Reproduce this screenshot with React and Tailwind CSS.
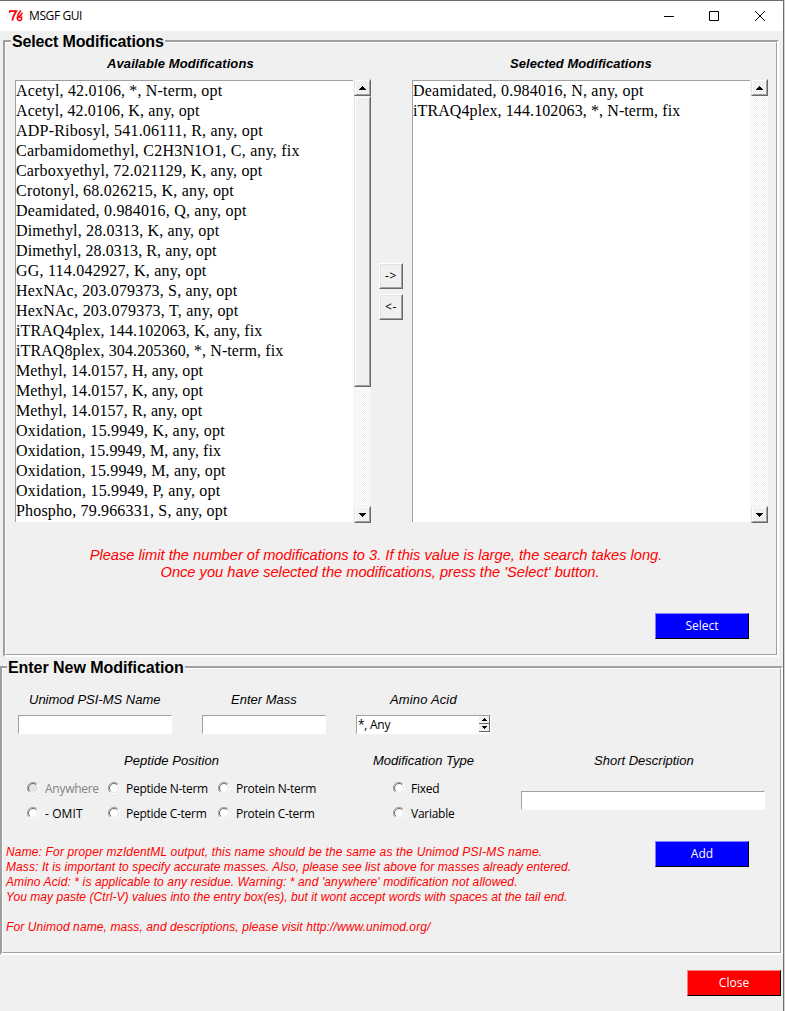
import React from "react";

const TIGHT = "tracking-[0.1px]";
const MEDIUM = "tracking-[0.16px]";
const WIDE = "tracking-[0.22px]";

const available = [
  ["Acetyl, 42.0106, *, N-term, opt", MEDIUM],
  ["Acetyl, 42.0106, K, any, opt", TIGHT],
  ["ADP-Ribosyl, 541.06111, R, any, opt", WIDE],
  ["Carbamidomethyl, C2H3N1O1, C, any, fix", WIDE],
  ["Carboxyethyl, 72.021129, K, any, opt", MEDIUM],
  ["Crotonyl, 68.026215, K, any, opt", WIDE],
  ["Deamidated, 0.984016, Q, any, opt", WIDE],
  ["Dimethyl, 28.0313, K, any, opt", MEDIUM],
  ["Dimethyl, 28.0313, R, any, opt", TIGHT],
  ["GG, 114.042927, K, any, opt", WIDE],
  ["HexNAc, 203.079373, S, any, opt", MEDIUM],
  ["HexNAc, 203.079373, T, any, opt", WIDE],
  ["iTRAQ4plex, 144.102063, K, any, fix", TIGHT],
  ["iTRAQ8plex, 304.205360, *, N-term, fix", TIGHT],
  ["Methyl, 14.0157, H, any, opt", TIGHT],
  ["Methyl, 14.0157, K, any, opt", TIGHT],
  ["Methyl, 14.0157, R, any, opt", TIGHT],
  ["Oxidation, 15.9949, K, any, opt", WIDE],
  ["Oxidation, 15.9949, M, any, fix", TIGHT],
  ["Oxidation, 15.9949, M, any, opt", MEDIUM],
  ["Oxidation, 15.9949, P, any, opt", WIDE],
  ["Phospho, 79.966331, S, any, opt", MEDIUM],
];

const selected = [
  ["Deamidated, 0.984016, N, any, opt", WIDE],
  ["iTRAQ4plex, 144.102063, *, N-term, fix", TIGHT],
];

/* Two-tone etched frame with its caption over the top edge */
function GroupFrame({ className, caption, captionClass, children }) {
  return (
    <section
      className={`relative border-t-2 border-l-2 border-r-2 border-b-2 border-t-[#a0a0a0] border-l-[#a0a0a0] border-r-white border-b-white ${className}`}
    >
      <div className="h-full border border-t-white border-l-white border-r-[#a0a0a0] border-b-[#a0a0a0]">
        {children}
      </div>
      <h2
        className={`absolute -top-[10px] h-[20px] bg-[#f0f0f0] px-px text-[16px] leading-[20px] font-bold whitespace-nowrap ${captionClass}`}
      >
        {caption}
      </h2>
    </section>
  );
}

function Raised({ className, children }) {
  return (
    <div
      className={`shrink-0 border border-t-[#f0f0f0] border-l-[#e3e3e3] border-r-[#696969] border-b-[#696969] bg-[#f0f0f0] ${className}`}
    >
      <div className="flex h-full items-center justify-center border border-t-white border-l-white border-r-[#a0a0a0] border-b-[#a0a0a0]">
        {children}
      </div>
    </div>
  );
}

function Arrow({ down }) {
  return (
    <svg width="7" height="4" viewBox="0 0 7 4" shapeRendering="crispEdges">
      <path
        d={
          down
            ? "M0 0h7v1H0zM1 1h5v1H1zM2 2h3v1H2zM3 3h1v1H3z"
            : "M3 0h1v1H3zM2 1h3v1H2zM1 2h5v1H1zM0 3h7v1H0z"
        }
        fill="#000"
      />
    </svg>
  );
}

function ScrollList({ items, thumb }) {
  return (
    <div className="flex h-[444px]">
      <ul className="mt-px h-[442px] w-[338px] overflow-hidden border-t border-l border-[#a0a0a0] bg-white font-['Liberation_Serif',serif] text-[16px] leading-[20px] whitespace-nowrap">
        {items.map(([text, tracking]) => (
          <li key={text} className={`h-[20px] ${tracking}`}>
            {text}
          </li>
        ))}
      </ul>
      <div className="flex w-[18px] flex-col bg-[repeating-conic-gradient(#ffffff_0_25%,#f0f0f0_0_50%)] bg-[length:2px_2px] pl-px">
        <Raised className="h-[17px] w-[17px]">
          <Arrow />
        </Raised>
        {thumb && <Raised className="h-[291px] w-[17px]" />}
        <div className="grow" />
        <Raised className="h-[17px] w-[17px]">
          <Arrow down />
        </Raised>
      </div>
    </div>
  );
}

function MoveButton({ children }) {
  return (
    <button className="h-[26px] w-[24px] border border-t-white border-l-white border-r-[#696969] border-b-[#696969]">
      <span className="flex h-full items-center justify-center border border-t-[#e3e3e3] border-l-[#e3e3e3] border-r-[#a0a0a0] border-b-[#a0a0a0] font-['Open_Sans',sans-serif] text-[12px] leading-none tracking-[0.6px]">
        {children}
      </span>
    </button>
  );
}

function ActionButton({ className, children }) {
  return (
    <button
      className={`flex h-[26px] w-[94px] items-center justify-center border border-r-black border-b-black font-['Open_Sans',sans-serif] text-[12px] leading-[16px] text-white ${className}`}
    >
      {children}
    </button>
  );
}

function Entry({ className, children }) {
  return (
    <div
      className={`flex h-[19px] border border-t-[#a0a0a0] border-l-[#a0a0a0] border-r-white border-b-white bg-white ${className}`}
    >
      {children}
    </div>
  );
}

function Radio({ disabled, wide, children }) {
  return (
    <label
      className={`flex h-[25px] items-center font-['Open_Sans',sans-serif] text-[12px] whitespace-nowrap ${
        disabled ? "text-[#838383]" : "text-black"
      } ${wide ? "tracking-[0.1px]" : "tracking-[-0.27px]"}`}
    >
      <svg width="12" height="12" viewBox="0 0 12 12" className="mr-[6px] -mt-[2px] shrink-0">
        <circle cx="6" cy="6" r="5" fill={disabled ? "#e6e6e6" : "#fff"} />
        <path d="M2 10A5.5 5.5 0 0 1 10 2" fill="none" stroke="#a0a0a0" />
        <path d="M2.8 9.2A4.5 4.5 0 0 1 9.2 2.8" fill="none" stroke="#696969" />
        <path d="M2 10A5.6 5.6 0 0 0 10 2" fill="none" stroke="#fff" />
        <path d="M2.8 9.2A4.5 4.5 0 0 0 9.2 2.8" fill="none" stroke="#e3e3e3" />
      </svg>
      {children}
    </label>
  );
}

function FieldLabel({ className, children }) {
  return (
    <div className={`h-[18px] text-[13px] leading-[18px] whitespace-nowrap italic ${className}`}>
      {children}
    </div>
  );
}

export default function App() {
  return (
    <div className="flex h-[1011px] w-[785px] overflow-hidden bg-[#d4d4d4] font-['Liberation_Sans',sans-serif] text-black">
      <div className="flex w-[784px] flex-col border-t border-r border-[#6e6e6e] bg-[#f0f0f0]">
        <header className="flex h-[30px] shrink-0 items-center bg-white pl-[9px]">
          <svg width="15" height="12" viewBox="0 0 15 12" fill="none" stroke="#ff0000">
            <path d="M.3 3V1.200H7.200L5.500 4.200L4 7.500L3.300 10.600" strokeWidth="1.8" />
            <path d="M11.800 .3L9.300 4.300L8.200 8.200L9 10.300" strokeWidth="1.5" />
            <path d="M13.600 2.800L10.800 6L9.400 7.400H12.600V9.300L11.500 10.500L9 10.300" strokeWidth="1.4" />
            <path d="M11.200 5.300L13.300 6.300" />
          </svg>
          <h1 className="ml-[5px] font-['Open_Sans',sans-serif] text-[12px] leading-[16px] tracking-[-0.4px]">
            MSGF GUI
          </h1>
          <svg
            width="102"
            height="12"
            viewBox="0 0 102 12"
            className="mr-[17px] ml-auto"
            fill="none"
            stroke="#000"
          >
            <path d="M0 6.500h10" />
            <path d="M45.500 1.500h9v9h-9z" />
            <path d="M91 1l10 10M101 1L91 11" />
          </svg>
        </header>

        <GroupFrame
          className="mt-[9px] ml-[3px] h-[617px] w-[776px] shrink-0"
          caption="Select Modifications"
          captionClass="left-[6px] tracking-[-0.15px]"
        >
          <div className="flex h-full flex-col pt-[12px]">
            <div className="flex pl-[9px]">
              <div className="w-[356px]">
                <h3 className="mb-[6px] h-[18px] pl-[92px] text-[13px] leading-[18px] font-bold tracking-[0.1px] italic">
                  Available Modifications
                </h3>
                <ScrollList items={available} thumb />
              </div>
              <div className="flex w-[41px] flex-col gap-[5px] pt-[208px] pl-[8px]">
                <MoveButton>-&gt;</MoveButton>
                <MoveButton>&lt;-</MoveButton>
              </div>
              <div className="w-[356px]">
                <h3 className="mb-[6px] h-[18px] pl-[98px] text-[13px] leading-[18px] font-bold tracking-[0.04px] italic">
                  Selected Modifications
                </h3>
                <ScrollList items={selected} />
              </div>
            </div>
            <p className="mt-[24px] h-[34px] pr-[30px] text-center text-[14.67px] leading-[17px] whitespace-nowrap text-[#ff0000] italic">
              Please limit the number of modifications to 3. If this value is large, the search takes long.
              <br />
              <span className="pl-[8px]">
                Once you have selected the modifications, press the 'Select' button.
              </span>
            </p>
            <ActionButton className="mt-[32px] ml-[649px] border-t-[#7f7fff] border-l-[#7f7fff] bg-[#0000ff]">
              Select
            </ActionButton>
          </div>
        </GroupFrame>

        <GroupFrame
          className="mt-[9px] h-[289px] w-[783px] shrink-0"
          caption="Enter New Modification"
          captionClass="left-[5px] tracking-[-0.05px]"
        >
          <div className="flex h-full flex-col pt-[22px]">
            <div className="flex">
              <div className="w-[184px] pl-[15px]">
                <FieldLabel className="mb-[6px] pl-[11px]">Unimod PSI-MS Name</FieldLabel>
                <Entry className="w-[154px]" />
              </div>
              <div className="w-[154px] pl-[15px]">
                <FieldLabel className="mb-[6px] pl-[29px]">Enter Mass</FieldLabel>
                <Entry className="w-[124px]" />
              </div>
              <div className="w-[150px] pl-[15px]">
                <FieldLabel className="mb-[6px] pl-[34px] tracking-[0.15px]">Amino Acid</FieldLabel>
                <Entry className="w-[135px]">
                  <span className="grow pl-px font-['Open_Sans',sans-serif] text-[12px] leading-[18px] tracking-[-0.27px]">
                    *, Any
                  </span>
                  <span className="flex w-[11px] flex-col">
                    <span className="flex h-[8px] items-center justify-center border-r border-b border-[#696969] bg-[#f0f0f0]">
                      <svg width="5" height="3" viewBox="0 0 5 3" shapeRendering="crispEdges">
                        <path d="M2 0h1v1H2zM1 1h3v1H1zM0 2h5v1H0z" />
                      </svg>
                    </span>
                    <span className="flex h-[8px] items-center justify-center border-r border-b border-[#696969] bg-[#f0f0f0]">
                      <svg width="5" height="3" viewBox="0 0 5 3" shapeRendering="crispEdges">
                        <path d="M0 0h5v1H0zM1 1h3v1H1zM2 2h1v1H2z" />
                      </svg>
                    </span>
                  </span>
                </Entry>
              </div>
            </div>

            <div className="mt-[18px] flex">
              <div className="w-[366px]">
                <FieldLabel className="mb-[6px] pl-[121px] tracking-[0.07px]">Peptide Position</FieldLabel>
                <div className="grid grid-cols-[81px_110px_auto] pl-[24px]">
                  <Radio disabled>Anywhere</Radio>
                  <Radio>Peptide N-term</Radio>
                  <Radio>Protein N-term</Radio>
                  <Radio wide>- OMIT</Radio>
                  <Radio>Peptide C-term</Radio>
                  <Radio>Protein C-term</Radio>
                </div>
              </div>
              <div className="w-[152px]">
                <FieldLabel className="mb-[6px] pl-[4px]">Modification Type</FieldLabel>
                <div className="pl-[24px]">
                  <Radio>Fixed</Radio>
                  <Radio>Variable</Radio>
                </div>
              </div>
              <div>
                <FieldLabel className="mb-[21px] pl-[73px]">Short Description</FieldLabel>
                <Entry className="w-[244px]" />
              </div>
            </div>

            <div className="mt-[15px] flex">
              <div className="w-[652px] pt-[4px] pl-[3px] text-[12px] leading-[15px] whitespace-nowrap text-[#ff0000] italic">
                <p className="tracking-[0.15px]">
                  Name: For proper mzIdentML output, this name should be the same as the Unimod PSI-MS name.
                </p>
                <p className="tracking-[0.09px]">
                  Mass: It is important to specify accurate masses. Also, please see list above for masses already entered.
                </p>
                <p className="tracking-[0.12px]">
                  Amino Acid: * is applicable to any residue. Warning: * and 'anywhere' modification not allowed.
                </p>
                <p className="tracking-[0.055px]">
                  You may paste (Ctrl-V) values into the entry box(es), but it wont accept words with spaces at the tail end.
                </p>
                <p className="mt-[15px] tracking-[0.1px]">
                  For Unimod name, mass, and descriptions, please visit http://www.unimod.org/
                </p>
              </div>
              <ActionButton className="border-t-[#7f7fff] border-l-[#7f7fff] bg-[#0000ff]">
                Add
              </ActionButton>
            </div>
          </div>
        </GroupFrame>

        <ActionButton className="mt-[15px] ml-[687px] shrink-0 border-t-[#ff7f7f] border-l-[#ff7f7f] bg-[#ff0000]">
          Close
        </ActionButton>
      </div>
    </div>
  );
}
